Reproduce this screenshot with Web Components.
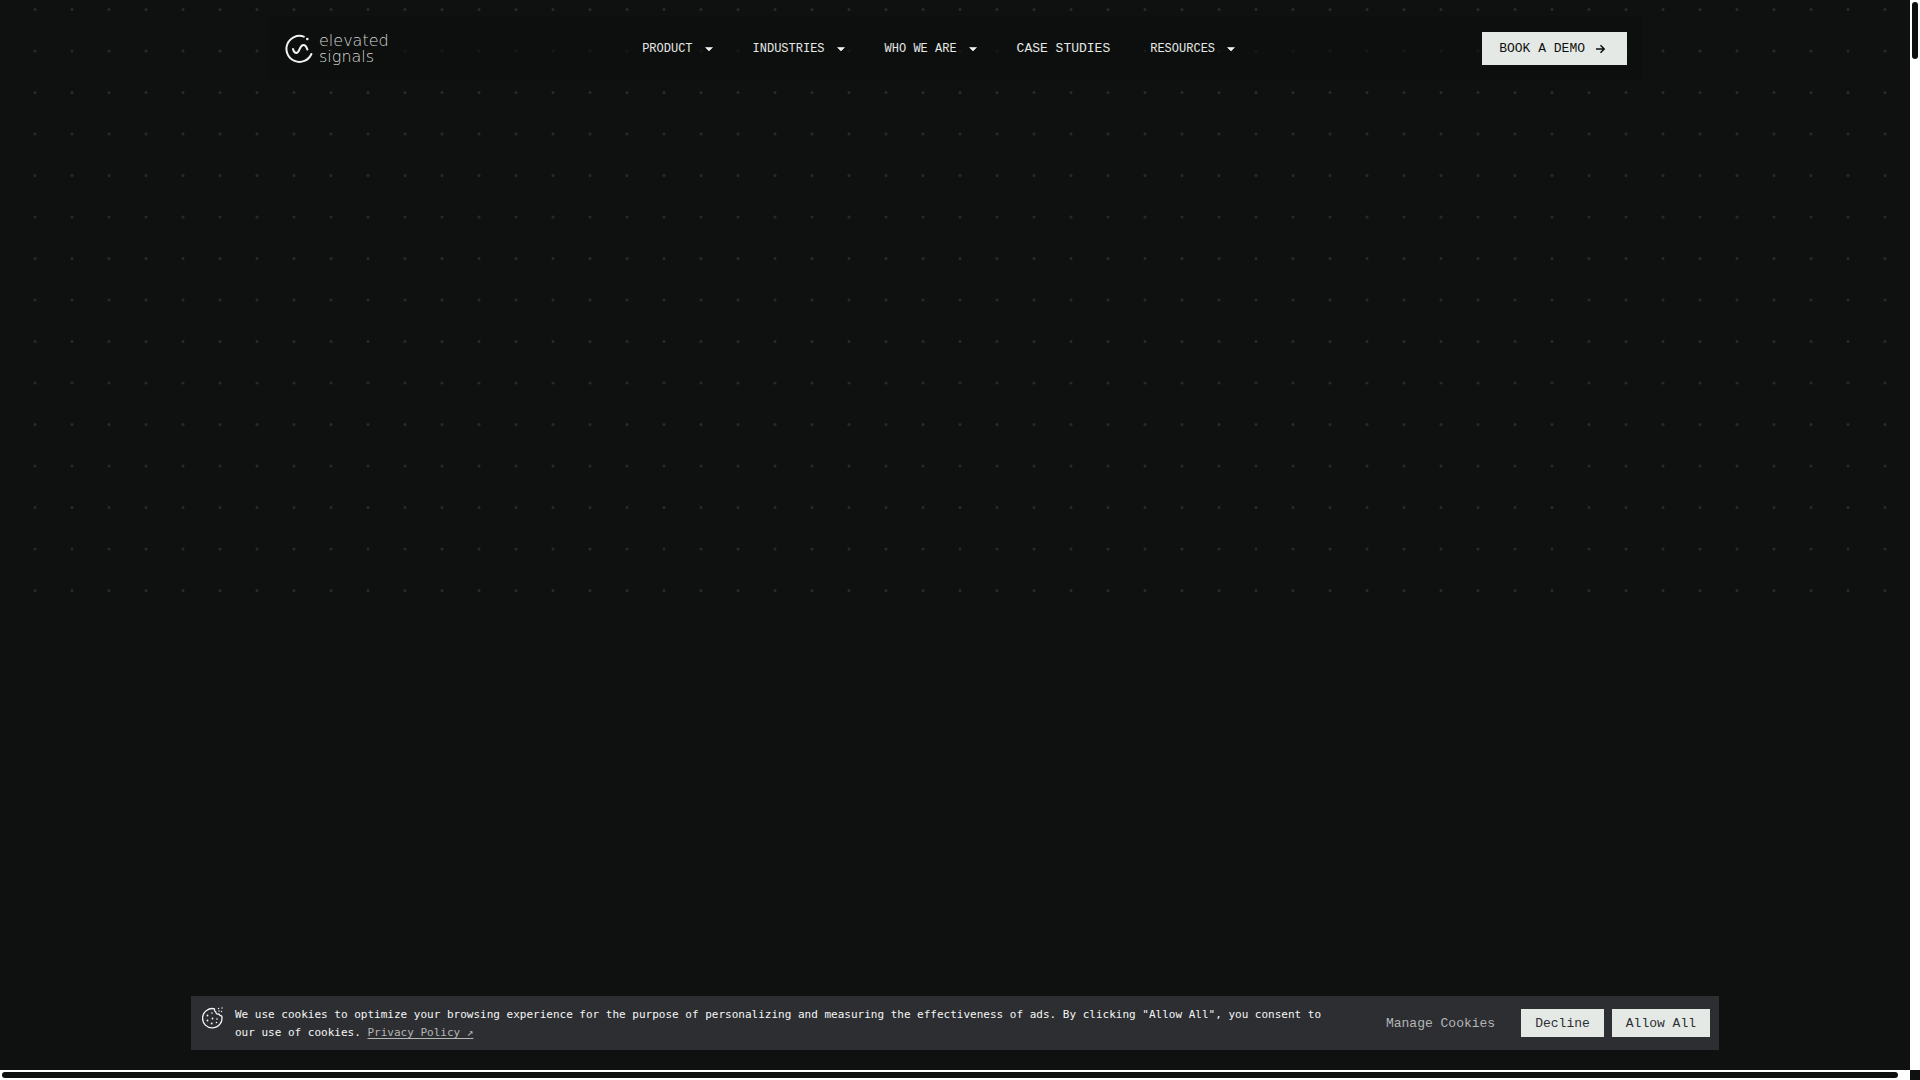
<!DOCTYPE html>
<html lang="en">
<head>
<meta charset="utf-8">
<title>Elevated Signals</title>
<style>
  html, body { margin: 0; height: 100%; overflow: hidden; background: #0e110f; }
  body { font-family: "Liberation Mono", monospace; color: #e5e9e5; }
</style>
</head>
<body>
<es-page>
  <es-header slot="header">
    <es-logo slot="brand"></es-logo>
    <es-nav-item menu>PRODUCT</es-nav-item>
    <es-nav-item menu>INDUSTRIES</es-nav-item>
    <es-nav-item menu>WHO WE ARE</es-nav-item>
    <es-nav-item>CASE STUDIES</es-nav-item>
    <es-nav-item menu>RESOURCES</es-nav-item>
    <es-cta slot="action">BOOK A DEMO</es-cta>
  </es-header>
  <es-cookie-bar slot="footer">
    We use cookies to optimize your browsing experience for the purpose of personalizing and measuring the effectiveness of ads. By clicking "Allow All", you consent to our use of cookies.
    <es-button slot="actions" plain>Manage Cookies</es-button>
    <es-button slot="actions">Decline</es-button>
    <es-button slot="actions">Allow All</es-button>
  </es-cookie-bar>
</es-page>

<script>
const define = (name, html) => {
  const template = document.createElement('template');
  template.innerHTML = html;
  customElements.define(name, class extends HTMLElement {
    constructor() {
      super();
      this.attachShadow({ mode: 'open' }).append(template.content.cloneNode(true));
    }
  });
};

define('es-dot-grid', `
  <style>
    :host { display: block; height: 612px; }
    svg { display: block; width: 100%; height: 100%; }
  </style>
  <svg aria-hidden="true">
    <defs>
      <pattern id="dots" width="37" height="83" patternUnits="userSpaceOnUse">
        <circle cx="35" cy="9.5" r="1.5" fill="#272a28"/>
        <circle cx="35" cy="51" r="1.5" fill="#272a28"/>
      </pattern>
    </defs>
    <rect width="100%" height="100%" fill="url(#dots)"/>
  </svg>`);

define('es-scrollbar', `
  <style>
    :host { display: flex; box-sizing: border-box; padding: 2px; background: #fff; }
    i { display: block; background: #0e0f0f; border-radius: 3px; }
    :host([vertical]) i { width: 6px; height: 57px; }
    :host([horizontal]) { padding-right: 12px; }
    :host([horizontal]) i { flex: 1; height: 6px; }
  </style>
  <i></i>`);

define('es-page', `
  <style>
    :host { display: grid; grid-template: 1fr 10px / 1fr 10px; height: 100vh; background: #0e110f; }
    main { position: relative; display: flex; flex-direction: column; justify-content: space-between;
           padding: 16px 0 20px; background: #0e110f; min-width: 0; }
    es-dot-grid { position: absolute; inset: 0 0 auto; }
    slot { display: block; position: relative; }
  </style>
  <main>
    <es-dot-grid></es-dot-grid>
    <slot name="header"></slot>
    <slot name="footer"></slot>
  </main>
  <es-scrollbar vertical></es-scrollbar>
  <es-scrollbar horizontal></es-scrollbar>`);

define('es-header', `
  <style>
    :host { display: block; }
    header { display: flex; align-items: center; justify-content: space-between; box-sizing: border-box;
             max-width: 1374px; height: 65px; margin: 0 auto; padding: 0 15px 0 17px;
             background: rgba(14, 15, 14, .6); }
    nav { display: flex; align-items: center; gap: 40px; }
  </style>
  <header>
    <slot name="brand"></slot>
    <nav aria-label="Main"><slot></slot></nav>
    <slot name="action"></slot>
  </header>`);

define('es-logo', `
  <style>
    :host { display: block; }
    a { display: flex; align-items: center; gap: 6px; color: #d3d7d4; text-decoration: none;
        font: 200 16px/16px "DejaVu Sans", sans-serif; width: 110px; white-space: nowrap; }
    svg { flex: none; display: block; }
    span { display: block; }
  </style>
  <a href="#">
    <svg width="28" height="30" viewBox="0 0 28 30" fill="none" stroke="#f0f4f1" stroke-width="2" stroke-linecap="round" aria-hidden="true">
      <path d="M18.8 2.6A13 13 0 1 0 26.4 20"/>
      <path d="M8 15C8.600 17.500 9.500 19 11.300 19C15 19 14.200 11 18.400 11C20.800 11 21.600 13 22.400 15.600"/>
      <circle cx="22.300" cy="5" r="1.300" fill="#f0f4f1" stroke="none"/>
    </svg>
    <div><span>elevated</span><span>signals</span></div>
  </a>`);

const navStyle = `
  <style>
    :host { display: block; }
    a, button { display: flex; align-items: center; gap: 12px; padding: 0; border: 0; background: none;
        color: #e5e9e5; font: 12px/20px "Liberation Mono", monospace; text-decoration: none; white-space: nowrap; }
    a { font-size: 13px; }
    svg { display: block; }
  </style>`;
customElements.define('es-nav-item', class extends HTMLElement {
  constructor() {
    super();
    this.attachShadow({ mode: 'open' }).innerHTML = navStyle + (this.hasAttribute('menu')
      ? `<button type="button" aria-haspopup="true"><slot></slot><svg width="8" height="6" viewBox="0 0 8 6" aria-hidden="true"><path d="M.5 1.500h7L4 5z" fill="#f0f4f1" stroke="#f0f4f1" stroke-width=".6" stroke-linejoin="round"/></svg></button>`
      : `<a href="#"><slot></slot></a>`);
  }
});

define('es-cta', `
  <style>
    :host { display: block; }
    a { display: flex; align-items: center; gap: 10px; height: 33px; padding: 0 21px 0 17px;
        background: #e5e9e5; color: #0e110f; font: 13px/34px "Liberation Mono", monospace;
        text-decoration: none; white-space: nowrap; }
  </style>
  <a href="#"><slot></slot>
    <svg width="11" height="10" viewBox="0 0 11 10" fill="none" stroke="#0e110f" stroke-width="1.500" aria-hidden="true">
      <path d="M1 5h8M5.500 1.300L9.200 5L5.500 8.700"/>
    </svg>
  </a>`);

define('es-button', `
  <style>
    :host { display: block; }
    button { display: block; height: 28px; padding: 2px 14px 0; border: 0; border-radius: 0; background: #e5e9e5; color: #2d2e32;
             font: 13px/26px "Liberation Mono", monospace; white-space: nowrap; }
    :host([plain]) button { background: none; color: #b4b6b6; margin-right: 4px; }
  </style>
  <button type="button"><slot></slot></button>`);

define('es-cookie-bar', `
  <style>
    :host { display: flex; align-items: center; box-sizing: border-box; width: 80%; margin: 0 auto;
            padding: 9px 9px 9px 11px; background: #2d2e32; color: #f4f6f5; }
    svg { flex: none; align-self: flex-start; margin: 2px 12px 0 0; }
    p { flex: 1; margin: 1px 28px -1px 0; font: 11px/18px "DejaVu Sans Mono", monospace; }
    a { color: #b4b6b6; text-decoration: underline; text-underline-offset: 2px; }
    div { display: flex; gap: 8px; }
  </style>
  <svg width="21" height="22" viewBox="0 0 21 22" fill="none" stroke="#f4f6f5" stroke-width="1.300" stroke-linecap="round" stroke-linejoin="round" aria-hidden="true">
    <path d="M12.500 1.800A9.700 9.700 0 1 0 19.700 9Q17.500 9 17 7Q14 7.500 13.700 4.700Q12 4 12.500 1.800Z"/>
    <g fill="#f4f6f5" stroke="none">
      <circle cx="10" cy="6" r=".8"/><circle cx="5.500" cy="8.500" r=".9"/><circle cx="10.500" cy="11.500" r=".9"/>
      <circle cx="5.500" cy="13.500" r=".9"/><circle cx="15" cy="12" r=".8"/><circle cx="9.700" cy="16.500" r=".9"/>
      <circle cx="14.500" cy="15.500" r=".8"/><circle cx="16.500" cy="1.500" r=".7"/><circle cx="20" cy="1" r=".7"/>
      <circle cx="17" cy="4" r=".7"/><circle cx="19.500" cy="4.500" r=".7"/>
    </g>
  </svg>
  <p><slot></slot> <a href="#">Privacy Policy ↗</a></p>
  <div><slot name="actions"></slot></div>`);
</script>
</body>
</html>
